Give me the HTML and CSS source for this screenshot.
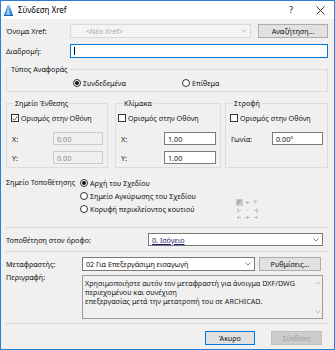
FILE: index.html
```html
<!DOCTYPE html>
<html>
<head>
    <title>Σύνδεση Xref</title>
    <link rel="stylesheet" href="styles.css">
</head>
<body>
<div class="dialog">
    <div class="titlebar">
        <svg class="app-icon" width="11" height="12" viewBox="0 0 11 12">
            <path d="M1 11 L5 1 L6 1 L10 11 Z" fill="#2c7fd6"/>
            <path d="M5 1 L6 1 L7 11 L3 11 Z" fill="#8cc4f5"/>
            <path d="M1 11 L10 11 L10 12 L1 12 Z" fill="#1b5fae"/>
        </svg>
        <span class="title">Σύνδεση Xref</span>
        <span class="help">?</span>
        <svg class="close" width="9" height="9" viewBox="0 0 9 9">
            <path d="M0.5 0.5 L8.5 8.5 M8.5 0.5 L0.5 8.5" stroke="#222" stroke-width="0.9"/>
        </svg>
    </div>

    <div class="content">
        <div class="row row-name">
            <span class="label">Όνομα Xref:</span>
            <div class="combo combo-disabled">
                <span class="combo-text">&lt;Νέο Xref&gt;</span>
                <svg class="chevron" width="6" height="4" viewBox="0 0 6 4"><path d="M0.5 0.5 L3 3 L5.5 0.5" fill="none" stroke="#b5b5b5" stroke-width="0.8"/></svg>
            </div>
            <button class="btn btn-browse">Αναζήτηση...</button>
        </div>

        <div class="row row-path">
            <span class="label">Διαδρομή:</span>
            <div class="field field-focus"><span class="caret"></span></div>
        </div>

        <fieldset class="group group-type">
            <legend>Τύπος Αναφοράς</legend>
            <div class="type-options">
                <span class="radio-item opt-linked"><span class="radio on"></span>Συνδεδεμένα</span>
                <span class="radio-item"><span class="radio"></span>Επίθεμα</span>
            </div>
        </fieldset>

        <div class="groups">
            <fieldset class="group group-insert">
                <legend>Σημείο Ένθεσης</legend>
                <div class="check-item">
                    <span class="check"><svg width="7" height="7" viewBox="0 0 7 7"><path d="M0.8 3.6 L2.7 5.5 L6.3 1.2" fill="none" stroke="#222" stroke-width="0.9"/></svg></span>
                    Ορισμός στην Οθόνη
                </div>
                <div class="coord"><span class="coord-label">X:</span><div class="field field-disabled">0.00</div></div>
                <div class="coord"><span class="coord-label">Y:</span><div class="field field-disabled">0.00</div></div>
            </fieldset>

            <fieldset class="group group-scale">
                <legend>Κλίμακα</legend>
                <div class="check-item"><span class="check"></span>Ορισμός στην Οθόνη</div>
                <div class="coord"><span class="coord-label">X:</span><div class="field">1.00</div></div>
                <div class="coord"><span class="coord-label">Y:</span><div class="field">1.00</div></div>
            </fieldset>

            <fieldset class="group group-rotate">
                <legend>Στροφή</legend>
                <div class="check-item"><span class="check"></span>Ορισμός στην Οθόνη</div>
                <div class="coord"><span class="coord-label">Γωνία:</span><div class="field">0.00°</div></div>
            </fieldset>
        </div>

        <div class="placement">
            <span class="label placement-label">Σημείο Τοποθέτησης</span>
            <div class="placement-options">
                <span class="radio-item"><span class="radio on"></span>Αρχή του Σχεδίου</span>
                <span class="radio-item"><span class="radio"></span>Σημείο Αγκύρωσης του Σχεδίου</span>
                <span class="radio-item"><span class="radio"></span>Κορυφή περικλείοντος κουτιού</span>
            </div>
            <svg class="anchor-grid" width="23" height="22" viewBox="0 0 23 22">
                <rect x="0" y="0" width="7" height="7" fill="#c9c9c9"/>
                <path d="M2 2 H5 M2 2 V5" stroke="#8a8a8a" stroke-width="0.8"/>
                <g stroke="#a8a8a8" stroke-width="0.7">
                    <path d="M9 3.5 H14 M11.5 2 V5"/>
                    <path d="M17 2 H21 M19 2 V5"/>
                    <path d="M2 9 V14 M2 11.5 H5"/>
                    <path d="M11 11.5 H12"/>
                    <path d="M21 9 V14 M18 11.5 H21"/>
                    <path d="M2 17 V20 M2 18.5 H5"/>
                    <path d="M9 18.5 H14 M11.5 17 V20"/>
                    <path d="M21 17 V20 M18 18.5 H21"/>
                </g>
            </svg>
        </div>

        <div class="sep sep-top"></div>

        <div class="row row-floor">
            <span class="label">Τοποθέτηση στον όροφο:</span>
            <div class="combo combo-floor">
                <span class="combo-text floor-text">0. Ισόγειο</span>
                <svg class="chevron" width="6" height="4" viewBox="0 0 6 4"><path d="M0.5 0.5 L3 3 L5.5 0.5" fill="none" stroke="#666" stroke-width="0.8"/></svg>
            </div>
        </div>

        <div class="sep sep-mid"></div>

        <div class="row row-translator">
            <span class="label label-short">Μεταφραστής:</span>
            <div class="combo combo-translator">
                <span class="combo-text">02 Για Επεξεργάσιμη εισαγωγή</span>
                <svg class="chevron" width="6" height="4" viewBox="0 0 6 4"><path d="M0.5 0.5 L3 3 L5.5 0.5" fill="none" stroke="#666" stroke-width="0.8"/></svg>
            </div>
            <button class="btn btn-settings">Ρυθμίσεις...</button>
        </div>

        <div class="row row-desc">
            <span class="label label-short">Περιγραφή:</span>
            <div class="memo">
                <div class="memo-text">Χρησιμοποιήστε αυτόν τον μεταφραστή για άνοιγμα DXF/DWG<br>περιεχομένου και συνέχιση<br>επεξεργασίας μετά την μετατροπή του σε ARCHICAD.</div>
                <div class="scrollbar">
                    <svg width="6" height="4" viewBox="0 0 6 4"><path d="M0.5 3.5 L3 1 L5.5 3.5" fill="none" stroke="#b0b0b0" stroke-width="0.8"/></svg>
                    <svg width="6" height="4" viewBox="0 0 6 4"><path d="M0.5 0.5 L3 3 L5.5 0.5" fill="none" stroke="#b0b0b0" stroke-width="0.8"/></svg>
                </div>
            </div>
        </div>

        <div class="sep sep-bottom"></div>

        <div class="actions">
            <button class="btn btn-default">Άκυρο</button>
            <button class="btn btn-disabled">Σύνδεση</button>
        </div>
    </div>
</div>
</body>
</html>
```

FILE: styles.css
```css
* {
    box-sizing: border-box;
}
html, body {
    margin: 0;
    padding: 0;
}
body {
    font-family: "Noto Sans", "Open Sans", sans-serif;
    font-size: 7.2px;
    line-height: 10px;
    color: #111;
    background: #fff;
}
.dialog {
    width: 335px;
    height: 350px;
    border: 1px solid #2a7fd4;
    background: #f0f0f0;
    display: flex;
    flex-direction: column;
}
.titlebar {
    height: 18px;
    background: #fff;
    display: flex;
    align-items: center;
    padding-left: 2px;
    flex-shrink: 0;
}
.app-icon {
    margin-right: 4px;
}
.title {
    font-size: 8px;
    color: #000;
    flex: 1;
}
.help {
    font-size: 8.5px;
    margin-right: 23px;
}
.close {
    margin-right: 9px;
}
.content {
    padding: 0 6px 0 5px;
}
.row {
    display: flex;
    align-items: center;
}
.label {
    width: 64px;
    flex-shrink: 0;
}
.row-name {
    margin-top: 5px;
    height: 14px;
}
.row-path {
    margin-top: 6px;
    height: 14px;
}
.combo, .field {
    height: 14px;
    border: 1px solid #7a7a7a;
    background: #fff;
    display: flex;
    align-items: center;
    padding: 0 3px;
}
.combo .combo-text {
    flex: 1;
}
.combo-disabled {
    width: 181px;
    background: #f4f4f4;
    border-color: #d9d9d9;
    color: #a8a8a8;
}
.combo-disabled .combo-text {
    padding-left: 12px;
}
.chevron {
    flex-shrink: 0;
}
.btn {
    font-family: inherit;
    font-size: 7.2px;
    line-height: 10px;
    height: 14px;
    padding: 0;
    border: 1px solid #adadad;
    background: #e1e1e1;
    color: #111;
}
.btn-browse {
    width: 70px;
    margin-left: 7px;
}
.field-focus {
    width: 258px;
    border-color: #0078d7;
}
.caret {
    width: 1px;
    height: 8px;
    background: #000;
}
.group {
    margin: 6px 0 0 0;
    padding: 0;
    border: 1px solid #dcdcdc;
    min-width: 0;
}
.group legend {
    padding: 0 1px;
    margin-left: 3px;
    line-height: 10px;
}
.group-type {
    padding: 4px 0 3px 0;
}
.type-options {
    display: flex;
    height: 10px;
}
.radio-item {
    display: flex;
    align-items: center;
    white-space: nowrap;
}
.radio {
    width: 8px;
    height: 8px;
    border: 1px solid #333;
    border-radius: 50%;
    background: #fff;
    margin-right: 2px;
    display: flex;
    align-items: center;
    justify-content: center;
    flex-shrink: 0;
}
.radio.on::after {
    content: "";
    width: 4px;
    height: 4px;
    border-radius: 50%;
    background: #111;
}
.opt-linked {
    margin-left: 66px;
    width: 109px;
}
.groups {
    display: flex;
}
.groups .group {
    padding: 5px 4px 3px 4px;
}
.group-insert {
    width: 102px;
}
.group-scale {
    width: 106px;
    margin-left: 7px !important;
}
.group-rotate {
    width: 103px;
    margin-left: 4px !important;
}
.check-item {
    display: flex;
    align-items: center;
    height: 10px;
    white-space: nowrap;
}
.check {
    width: 8px;
    height: 8px;
    border: 1px solid #333;
    background: #fff;
    margin-right: 2px;
    display: flex;
    align-items: center;
    justify-content: center;
    flex-shrink: 0;
}
.check svg {
    display: block;
}
.coord {
    display: flex;
    align-items: center;
    height: 13px;
    margin-top: 6px;
}
.check-item + .coord {
    margin-top: 9px;
}
.coord-label {
    flex: 1;
    padding-left: 1px;
}
.coord .field {
    height: 13px;
}
.group-insert .field {
    width: 50px;
}
.group-scale .field {
    width: 52px;
}
.group-rotate .field {
    width: 51px;
}
.field-disabled {
    background: #f0f0f0;
    border-color: #cccccc;
    color: #8a8a8a;
}
.group-scale .check-item {
    margin-left: -2px;
}
.placement {
    display: flex;
    margin-top: 8px;
    height: 39px;
}
.placement-label {
    width: 74px;
    line-height: 13px;
}
.placement-options {
    display: flex;
    flex-direction: column;
}
.placement-options .radio-item {
    height: 13px;
}
.anchor-grid {
    margin-left: 40px;
    margin-top: 23px;
}
.sep {
    height: 1px;
    background: #d4d4d4;
}
.sep-top {
    margin-top: 12px;
}
.row-floor {
    margin-top: 5px;
    height: 13px;
}
.row-floor .label {
    width: 142px;
}
.combo-floor {
    width: 175px;
    height: 13px;
}
.floor-text {
    text-decoration: underline;
    color: #1a1a6e;
}
.sep-mid {
    margin-top: 5px;
}
.row-translator {
    margin-top: 5px;
    height: 14px;
}
.label-short {
    width: 76px;
}
.combo-translator {
    width: 173px;
}
.btn-settings {
    width: 62px;
    margin-left: 4px;
}
.row-desc {
    margin-top: 4px;
    align-items: flex-start;
}
.row-desc .label {
    margin-top: -3px;
}
.memo {
    width: 241px;
    height: 44px;
    border: 1px solid #9a9a9a;
    background: #f0f0f0;
    display: flex;
}
.memo-text {
    flex: 1;
    padding: 3px 0 0 2px;
    line-height: 9px;
    color: #1a1a1a;
}
.scrollbar {
    width: 9px;
    display: flex;
    flex-direction: column;
    justify-content: space-between;
    align-items: center;
    padding: 5px 0 4px 0;
}
.sep-bottom {
    margin-top: 4px;
}
.actions {
    display: flex;
    justify-content: flex-end;
    margin-top: 7px;
    padding-right: 6px;
}
.btn-default {
    width: 50px;
    border-color: #0078d7;
}
.btn-disabled {
    width: 51px;
    margin-left: 16px;
    background: #cccccc;
    border-color: #bfbfbf;
    color: #a0a0a0;
}
```
